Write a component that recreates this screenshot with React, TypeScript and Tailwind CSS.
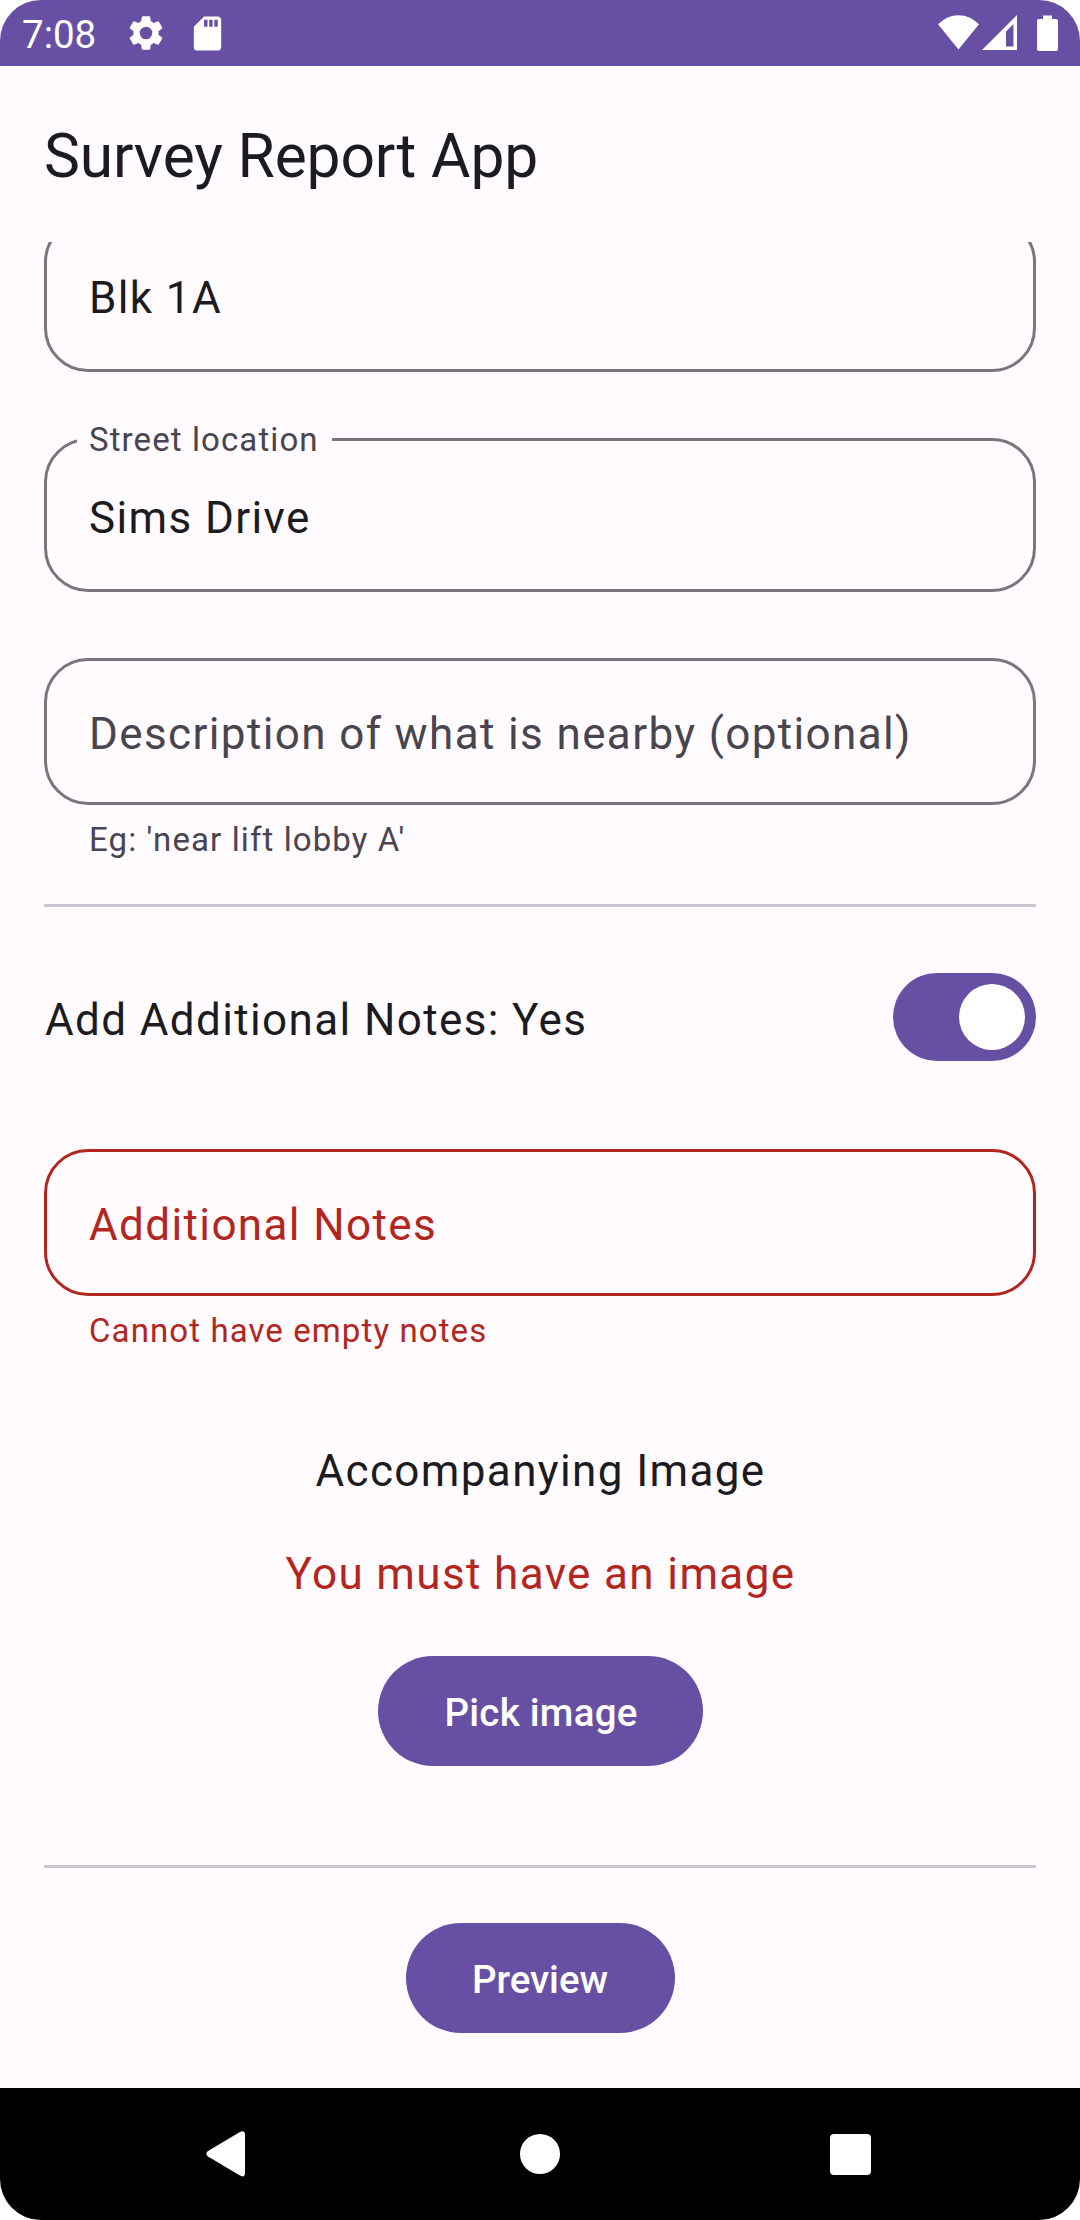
import React from "react";

function Field({ value, label, tone = "text-[#1c1b1f]", border = "border-[#79747e]", size = "h-[154px]" }: {
  value: string; label?: string; tone?: string; border?: string; size?: string;
}) {
  return (
    <div className={`relative flex shrink-0 items-center rounded-[44px] border-[3px] pl-[42px] pt-[5px] ${size} ${border}`}>
      {label && (
        <span className="absolute left-[30px] top-[-21px] h-[40px] bg-[#fffbff] pl-[12px] pr-[13px] text-[33px] leading-[40px] tracking-[1.1px] text-[#49454f]">
          {label}
        </span>
      )}
      <span className={`text-[44px] leading-[66px] tracking-[1.375px] whitespace-nowrap ${tone}`}>{value}</span>
    </div>
  );
}

function StatusBar() {
  return (
    <header className="flex h-[66px] shrink-0 items-center bg-[#6750a4] pl-[22px] text-white">
      <span className="w-[100px] pt-[4px] text-[38.5px] leading-[66px]">7:08</span>
      <svg className="ml-[3px] h-[42px] w-[42px]" viewBox="0 0 24 24" fill="currentColor">
        <path d="M19.14 12.94c.04-.3.06-.61.06-.94 0-.32-.02-.64-.07-.94l2.03-1.58a.49.49 0 0 0 .12-.61l-1.92-3.32a.488.488 0 0 0-.59-.22l-2.39.96c-.5-.38-1.03-.7-1.62-.94l-.36-2.54a.484.484 0 0 0-.48-.41h-3.84c-.24 0-.43.17-.47.41l-.36 2.54c-.59.24-1.13.57-1.62.94l-2.39-.96a.48.48 0 0 0-.59.22L2.74 8.87c-.12.21-.08.47.12.61l2.03 1.58c-.05.3-.09.63-.09.94s.02.64.07.94l-2.03 1.58a.49.49 0 0 0-.12.61l1.92 3.32c.12.22.37.29.59.22l2.39-.96c.5.38 1.03.7 1.62.94l.36 2.54c.05.24.24.41.48.41h3.84c.24 0 .44-.17.47-.41l.36-2.54c.59-.24 1.13-.56 1.62-.94l2.39.96c.22.08.47 0 .59-.22l1.92-3.32c.12-.22.07-.47-.12-.61l-2.01-1.58zM12 15.6A3.6 3.6 0 1 1 12 8.4a3.6 3.6 0 0 1 0 7.2z" />
      </svg>
      <svg className="ml-[20px] h-[41px] w-[41px]" viewBox="0 0 24 24" fill="currentColor">
        <path d="M18 2h-8L4 8v12c0 1.100.9 2 2 2h12c1.100 0 2-.9 2-2V4c0-1.100-.9-2-2-2zm-6 6h-2V4h2v4zm3 0h-2V4h2v4zm3 0h-2V4h2v4z" />
      </svg>
      <svg className="ml-auto h-[66px] w-[142px]" viewBox="938 0 142 66" fill="currentColor">
        <path d="M958.500 49.500 938 24.300Q947 15.200 958.500 15.200T979 24.300Z" />
        <path fillRule="evenodd" d="M982 50 1017 15V50ZM1006 46.500H1013.500V24L1006 31.500Z" />
        <path d="M1043 15.500H1052V19H1056Q1058 19 1058 21V49Q1058 51 1056 51H1039Q1037 51 1037 49V21Q1037 19 1039 19H1043Z" />
      </svg>
    </header>
  );
}

function NavBar() {
  return (
    <nav className="flex h-[132px] shrink-0 items-center bg-black text-white">
      <svg className="ml-[206px] h-[46px] w-[39px]" viewBox="0 0 39 46" fill="currentColor">
        <path d="M2 20 33.500 1.200Q39-1.500 39 4V41.500Q39 47.500 33.500 44.300L2 25.500Q-1.300 22.700 2 20Z" />
      </svg>
      <span className="ml-[275px] size-[40px] rounded-full bg-white" />
      <span className="ml-[270px] mt-px size-[41px] rounded-[4px] bg-white" />
    </nav>
  );
}

export default function App() {
  return (
    <div className="h-[2220px] w-[1080px] bg-white">
      <div className="flex h-full flex-col overflow-hidden rounded-[41px] bg-[#fffbff] font-[Roboto,sans-serif] text-[#1c1b1f]">
        <StatusBar />
        <h1 className="flex h-[176px] shrink-0 items-center pl-[44px] pt-[4px] text-[60.5px] leading-[77px] tracking-[-0.15px]">Survey Report App</h1>
        <main className="flex min-h-0 flex-1 flex-col overflow-hidden px-[44px]">
          <div className="-mt-[24px] flex shrink-0 flex-col">
            <Field value="Blk 1A" />
          </div>
          <div className="mt-[66px] flex shrink-0 flex-col">
            <Field value="Sims Drive" label="Street location" />
          </div>
          <div className="mt-[66px] flex shrink-0 flex-col">
            <Field value="Description of what is nearby (optional)" tone="text-[#49454f]" size="h-[147px]" />
          </div>
          <p className="mt-[13px] pl-[45px] text-[33px] leading-[44px] tracking-[1.1px] text-[#49454f]">Eg: 'near lift lobby A'</p>
          <hr className="mt-[42px] shrink-0 border-t-[3px] border-[#cac4d0]" />
          <div className="mt-[66px] flex h-[88px] shrink-0 items-center justify-between">
            <span className="pl-px pt-[5px] text-[44px] leading-[66px] tracking-[1.375px]">Add Additional Notes: Yes</span>
            <button className="flex h-[88px] w-[143px] items-center justify-end rounded-full bg-[#6750a4] pr-[11px]">
              <span className="size-[66px] rounded-full bg-white" />
            </button>
          </div>
          <div className="mt-[88px] flex shrink-0 flex-col">
            <Field value="Additional Notes" tone="text-[#b3261e]" border="border-[#b3261e]" size="h-[147px]" />
          </div>
          <p className="mt-[13px] pl-[45px] text-[33px] leading-[44px] tracking-[1.1px] text-[#b3261e]">Cannot have empty notes</p>
          <p className="mt-[85px] pl-px text-center text-[44px] leading-[66px] tracking-[1.375px]">Accompanying Image</p>
          <p className="mt-[37px] pl-px text-center text-[44px] leading-[66px] tracking-[1.375px] text-[#b3261e]">You must have an image</p>
          <button className="mt-[49px] flex h-[110px] w-[325px] shrink-0 items-center justify-center self-center rounded-full bg-[#6750a4] pl-[2px] pt-[4px] text-[38.5px] font-medium tracking-[0.25px] text-white">
            Pick image
          </button>
          <hr className="mt-[99px] shrink-0 border-t-[3px] border-[#cac4d0]" />
          <button className="mt-[55px] flex h-[110px] w-[269px] shrink-0 items-center justify-center self-center rounded-full bg-[#6750a4] pt-[4px] text-[38.5px] font-medium tracking-[-0.05px] text-white">
            Preview
          </button>
        </main>
        <NavBar />
      </div>
    </div>
  );
}
